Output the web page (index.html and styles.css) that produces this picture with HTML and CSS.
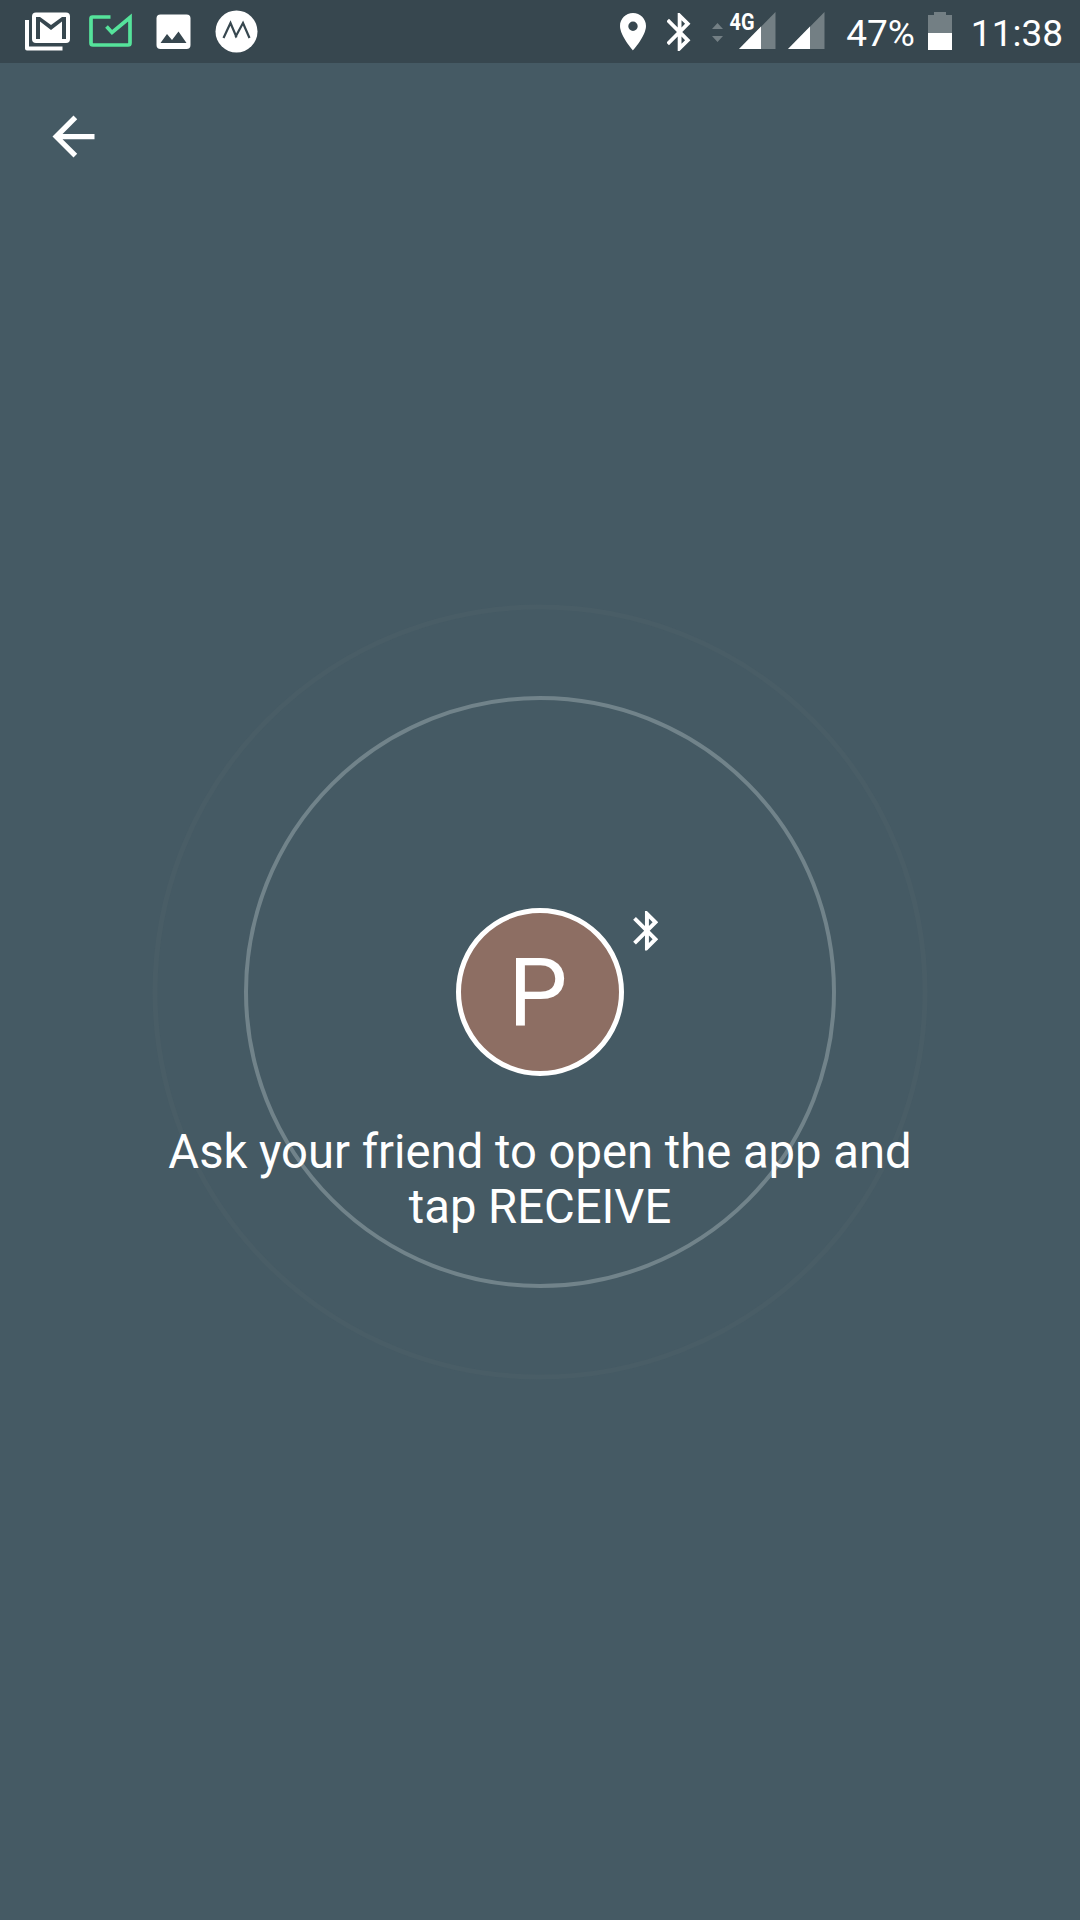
FILE: index.html
```html
<!DOCTYPE html>
<html lang="en">
<head>
  <meta charset="UTF-8">
  <meta name="viewport" content="width=device-width, initial-scale=1.0">
  <title>Send</title>
  <link rel="stylesheet" href="styles.css">
</head>
<body>
  <div class="status-bar">
    <div class="notifications">
      <svg class="gmail" width="46" height="63" viewBox="0 0 46 63">
        <path d="M2 20v28.500h35.500" fill="none" stroke="#fff" stroke-width="4" stroke-linejoin="round"/>
        <rect x="7" y="12.500" width="38" height="30.500" rx="4" fill="#fff"/>
        <path d="M11 39V17h4l11 8 11-8h4v22h-4V21.500L26 30 15 21.500V39z" fill="#37474f"/>
      </svg>
      <svg class="mail-check" width="46" height="63" viewBox="0 0 46 63">
        <path d="M22.500 17H4.500Q3 17 3 18.500V43Q3 45 5 45H40Q42 45 42 43V17.500L24 32.500 18.500 26.500" fill="none" stroke="#55e39b" stroke-width="3.700"/>
      </svg>
      <svg class="picture" width="35" height="63" viewBox="0 0 35 63">
        <rect x="0.500" y="14.500" width="34" height="34.500" rx="4" fill="#fff"/>
        <path d="M4.500 43l6.500-9 5 6 6.500-8.500L30.500 43z" fill="#37474f"/>
      </svg>
      <svg class="app" width="42" height="63" viewBox="0 0 42 63">
        <circle cx="20.500" cy="31.500" r="21" fill="#fff"/>
        <path d="M7.500 38l7-15 5.500 13 7-13 6.500 15M19.500 35.500l1 2" fill="none" stroke="#37474f" stroke-width="2.200"/>
      </svg>
    </div>
    <div class="system">
      <svg class="location" width="26" height="63" viewBox="0 0 26 63">
        <path d="M13 13C5.800 13 0 18.800 0 26c0 9.800 13 24.500 13 24.500S26 35.800 26 26c0-7.200-5.800-13-13-13zm0 18a4.700 4.700 0 1 1 0-9.400 4.700 4.700 0 0 1 0 9.400z" fill="#fff"/>
      </svg>
      <svg class="bluetooth" width="24" height="63" viewBox="0 0 24 63">
        <g transform="translate(-10.200 9.200) scale(1.900)">
          <path d="M17.710 7.710L12 2h-1v7.590L6.410 5 5 6.410 10.590 12 5 17.590 6.410 19 11 14.410V22h1l5.710-5.710-4.300-4.290 4.300-4.290zM13 5.830l1.880 1.880L13 9.590V5.830zm1.880 10.460L13 18.170v-3.760l1.880 1.880z" fill="#fff"/>
        </g>
      </svg>
      <svg class="data" width="11" height="63" viewBox="0 0 11 63">
        <path d="M0 29l5.500-6 5.500 6zM0 36h11l-5.500 6z" fill="#737f84"/>
      </svg>
      <svg class="signal-4g" width="47" height="63" viewBox="0 0 47 63">
        <path d="M46.500 12v37H10z" fill="#737f84"/>
        <path d="M32 26.500V49H10z" fill="#fff"/>
        <text class="network" x="0.500" y="30" textLength="25" lengthAdjust="spacingAndGlyphs">4G</text>
      </svg>
      <svg class="signal" width="37" height="63" viewBox="0 0 37 63">
        <path d="M36.500 12v37H0z" fill="#737f84"/>
        <path d="M22 26.500V49H0z" fill="#fff"/>
      </svg>
      <span class="percent">47%</span>
      <svg class="battery" width="24" height="63" viewBox="0 0 24 63">
        <path d="M6 12h12v3h6v18H0V15h6z" fill="#737f84"/>
        <path d="M0 33h24v17H0z" fill="#fff"/>
      </svg>
      <span class="clock">11:38</span>
    </div>
  </div>
  <header>
    <a class="back" href="#" aria-label="Back">
      <svg width="63" height="63" viewBox="0 0 24 24">
        <path d="M20 11H7.830l5.590-5.590L12 4l-8 8 8 8 1.410-1.410L7.830 13H20v-2z" fill="#fff"/>
      </svg>
    </a>
  </header>
  <main>
    <div class="radar">
      <div class="ring outer"></div>
      <div class="ring inner"></div>
      <div class="avatar"><span>P</span></div>
      <svg class="badge" width="26" height="40" viewBox="0 0 26 40">
        <path transform="translate(-8.700 -3.900) scale(1.970)" d="M17.710 7.710L12 2h-1v7.590L6.410 5 5 6.410 10.590 12 5 17.590 6.410 19 11 14.410V22h1l5.710-5.710-4.300-4.290 4.300-4.290zM13 5.830l1.880 1.880L13 9.590V5.830zm1.880 10.460L13 18.170v-3.760l1.880 1.880z" fill="#fff"/>
      </svg>
    </div>
    <p class="message">Ask your friend to open the app and tap RECEIVE</p>
  </main>
</body>
</html>
```
FILE: styles.css
```css
body {
  margin: 0;
  height: 1920px;
  overflow: hidden;
  background-color: #455a64;
  color: white;
  font-family: Roboto, sans-serif;
}
svg {
  display: block;
  flex: none;
}
.status-bar {
  display: flex;
  justify-content: space-between;
  height: 63px;
  box-sizing: border-box;
  padding: 0 17px 0 25px;
  background-color: #37474f;
}
.notifications,
.system {
  display: flex;
}
.mail-check {
  margin-left: 17px;
}
.picture {
  margin-left: 22px;
}
.app {
  margin-left: 25px;
  overflow: visible;
}
.bluetooth {
  margin-left: 21px;
}
.data {
  margin-left: 21px;
}
.signal-4g {
  margin-left: 6px;
}
.signal {
  margin-left: 12px;
}
.network {
  fill: white;
  font-size: 24px;
  font-weight: bold;
}
.percent,
.clock {
  font-size: 37px;
  line-height: 67px;
}
.percent {
  margin-left: 21px;
}
.battery {
  margin-left: 13px;
}
.clock {
  margin-left: 19px;
}
header {
  padding: 42px;
}
.back {
  display: block;
  width: 63px;
}
main {
  padding-top: 698px;
}
.radar {
  position: relative;
  width: 168px;
  height: 168px;
  margin: 0 auto;
}
.ring {
  position: absolute;
  top: 50%;
  left: 50%;
  box-sizing: border-box;
  border-radius: 50%;
  transform: translate(-50%, -50%);
}
.outer {
  width: 775px;
  height: 775px;
  border: 5px solid #495d66;
}
.inner {
  width: 592px;
  height: 592px;
  border: 4px solid #71838a;
}
.avatar {
  display: flex;
  align-items: center;
  justify-content: center;
  box-sizing: border-box;
  height: 168px;
  padding: 2px 4px 0 0;
  border: 5px solid white;
  border-radius: 50%;
  background-color: #8d6e63;
  font-size: 94px;
  line-height: 110px;
}
.badge {
  position: absolute;
  top: 3px;
  left: 176px;
}
/* above the rings */
.message {
  position: relative;
  width: 760px;
  margin: 49px auto 0;
  text-align: center;
  font-size: 47.2px;
  line-height: 55px;
}
```
